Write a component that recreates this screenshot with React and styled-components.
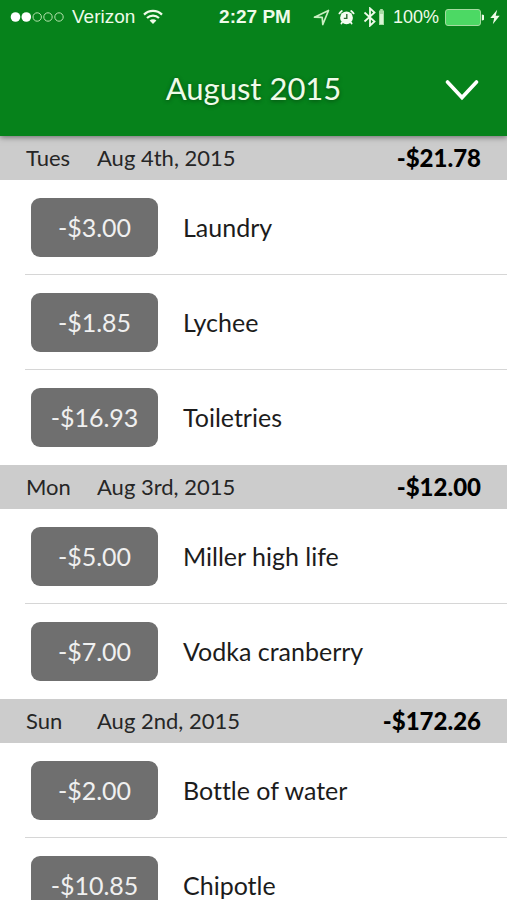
import React from 'react';
import styled, { createGlobalStyle } from 'styled-components';

const days = [
  {
    day: 'Tues',
    date: 'Aug 4th, 2015',
    total: '-$21.78',
    items: [
      { amount: '-$3.00', name: 'Laundry' },
      { amount: '-$1.85', name: 'Lychee' },
      { amount: '-$16.93', name: 'Toiletries' },
    ],
  },
  {
    day: 'Mon',
    date: 'Aug 3rd, 2015',
    total: '-$12.00',
    items: [
      { amount: '-$5.00', name: 'Miller high life' },
      { amount: '-$7.00', name: 'Vodka cranberry' },
    ],
  },
  {
    day: 'Sun',
    date: 'Aug 2nd, 2015',
    total: '-$172.26',
    items: [
      { amount: '-$2.00', name: 'Bottle of water' },
      { amount: '-$10.85', name: 'Chipotle' },
    ],
  },
];

const GlobalStyle = createGlobalStyle`
  * {
    box-sizing: border-box;
  }

  body {
    margin: 0;
    background: #fff;
    font-family: Lato, "Open Sans", sans-serif;
    font-variant-ligatures: none;
  }
`;

const Screen = styled.div`
  display: flex;
  flex-direction: column;
  height: 100vh;
`;

const TopBar = styled.header`
  position: relative;
  flex: none;
  background: #06821b;
  color: #effbe9;
  box-shadow: 0 1px 6px rgba(0, 0, 0, 0.5);
`;

const StatusBar = styled.div`
  display: grid;
  grid-template-columns: 1fr auto 1fr;
  align-items: center;
  height: 34px;
  padding: 0 7px 0 10px;
  font-family: "Liberation Sans", Arial, sans-serif;
  font-size: 19px;
`;

const StatusGroup = styled.div`
  display: flex;
  align-items: center;
  justify-content: ${(props) => (props.$end ? 'flex-end' : 'flex-start')};
  gap: ${(props) => props.$gap}px;

  svg {
    flex: none;
  }
`;

const Clock = styled.span`
  font-weight: 700;
`;

const BatteryLevel = styled.span`
  font-size: 18px;
`;

const TitleBar = styled.div`
  display: grid;
  grid-template-columns: 1fr auto 1fr;
  align-items: center;
  height: 102px;
  padding: 10px 22px 0;
`;

const Title = styled.h1`
  grid-column: 2;
  margin: 0;
  padding-bottom: 4px;
  font-size: 31px;
  font-weight: 400;
  line-height: 36px;
  text-shadow: 0 1px 4px rgba(0, 0, 0, 0.4);
`;

const MonthButton = styled.button`
  display: flex;
  justify-self: end;
  padding: 6px;
  border: 0;
  background: none;
  color: #fff;
  cursor: pointer;
`;

const Ledger = styled.main`
  flex: 1;
  min-height: 0;
  overflow-y: auto;
  scrollbar-width: none;
`;

const DayHeader = styled.h2`
  display: flex;
  align-items: center;
  height: 44px;
  margin: 0;
  padding: 0 26px 2px;
  background: #ccc;
  color: #262626;
  font-size: 22px;
  font-weight: 400;
`;

const Weekday = styled.span`
  width: 71px;
`;

const DayTotal = styled.strong`
  margin-left: auto;
  color: #000;
  font-size: 24px;
  font-weight: 900;
`;

const Entries = styled.ul`
  margin: 0;
  padding: 0 0 0 25px;
  list-style: none;
`;

const Entry = styled.li`
  display: flex;
  align-items: center;
  gap: 25px;
  height: 95px;
  padding: 1px 0 0 6px;
  border-bottom: 1px solid #d6d6d6;
  color: #1c1c1c;
  font-size: 25px;

  &:last-child {
    border-bottom-color: transparent;
  }
`;

const Amount = styled.button`
  flex: none;
  width: 127px;
  height: 59px;
  padding: 0 0 2px;
  border: 0;
  border-radius: 9px;
  background: #6f6f6f;
  color: #f0f0f0;
  font: inherit;
  cursor: pointer;
`;

const EntryName = styled.span`
  padding-bottom: 2px;
`;

const SignalDots = () => (
  <svg width="54" height="12" viewBox="0 0 54 12" aria-hidden="true">
    <circle cx="5.5" cy="6" r="4.8" fill="#fff" />
    <circle cx="16.3" cy="6" r="4.8" fill="#fff" />
    <g fill="none" stroke="#b5e3ae" strokeWidth="1">
      <circle cx="27.2" cy="6" r="4.2" />
      <circle cx="38" cy="6" r="4.2" />
      <circle cx="49" cy="6" r="4.2" />
    </g>
  </svg>
);

const WifiIcon = () => (
  <svg width="20" height="16" viewBox="0 0 20 16" aria-hidden="true">
    <g fill="none" stroke="currentColor" strokeWidth="2.2">
      <path d="M1 5.6a12.8 12.8 0 0 1 18 0" />
      <path d="M4 9a8.6 8.6 0 0 1 12 0" />
    </g>
    <path d="M6.6 11.6a4.8 4.8 0 0 1 6.8 0L10 15z" fill="currentColor" />
  </svg>
);

const LocationIcon = () => (
  <svg width="17" height="17" viewBox="0 0 17 17" aria-hidden="true">
    <path
      d="M1.5 8.2 15.5 1.5 9.8 15.5 9.2 8.4z"
      fill="none"
      stroke="#c9efc2"
      strokeWidth="1.7"
      strokeLinejoin="round"
    />
  </svg>
);

const AlarmIcon = () => (
  <svg width="17" height="17" viewBox="0 0 17 17" aria-hidden="true">
    <circle cx="8.5" cy="8.8" r="6.4" fill="#f4fcf0" />
    <g fill="none" stroke="#f4fcf0" strokeWidth="1.8" strokeLinecap="round">
      <path d="M1.4 4.4a9 9 0 0 1 2.4-2.5M15.6 4.4a9 9 0 0 0-2.4-2.5" />
      <path d="m4 13.6-.6.9M13 13.6l.6.9" />
    </g>
    <path d="M8.8 5v4.4H5.8" fill="none" stroke="#2b6b30" strokeWidth="1.4" />
  </svg>
);

// bluetooth rune with the accessory battery next to it
const BluetoothIcon = () => (
  <svg width="22" height="20" viewBox="0 0 22 20" aria-hidden="true">
    <path
      d="m1.5 5.5 10 9L7 18.7V1.3l4.5 4.2-10 9"
      fill="none"
      stroke="currentColor"
      strokeWidth="1.8"
    />
    <path d="M17.2 2h2.6v1.5H21V18h-5V3.5h1.2z" fill="#a9dca4" />
    <path d="M17 7h3v10h-3z" fill="#d9f4d4" />
  </svg>
);

const BatteryIcon = () => (
  <svg width="39" height="17" viewBox="0 0 39 17" aria-hidden="true">
    <rect x="0.5" y="0.5" width="35" height="16" rx="2.5" fill="#4cd964" stroke="#a5dca0" />
    <path d="M36.8 5.5a3 3 0 0 1 0 6z" fill="currentColor" />
  </svg>
);

const BoltIcon = () => (
  <svg width="10" height="16" viewBox="0 0 10 16" aria-hidden="true">
    <path d="M7.2.8.3 9h3.9l-1.4 6.2 6.9-8.5h-4z" fill="currentColor" />
  </svg>
);

const ChevronIcon = () => (
  <svg width="34" height="22" viewBox="0 0 34 22" aria-hidden="true">
    <path
      d="M2.5 3 17 18.500 31.500 3"
      fill="none"
      stroke="currentColor"
      strokeWidth="3.6"
      strokeLinecap="round"
    />
  </svg>
);

const App = () => {
  return (
    <Screen>
      <GlobalStyle />
      <TopBar>
        <StatusBar>
          <StatusGroup $gap={8}>
            <SignalDots />
            <span>Verizon</span>
            <WifiIcon />
          </StatusGroup>
          <Clock>2:27 PM</Clock>
          <StatusGroup $end $gap={8}>
            <StatusGroup $gap={8}>
              <LocationIcon />
              <AlarmIcon />
              <BluetoothIcon />
            </StatusGroup>
            <StatusGroup $gap={6}>
              <BatteryLevel>100%</BatteryLevel>
              <BatteryIcon />
              <BoltIcon />
            </StatusGroup>
          </StatusGroup>
        </StatusBar>
        <TitleBar>
          <Title>August 2015</Title>
          <MonthButton type="button" aria-label="Choose month">
            <ChevronIcon />
          </MonthButton>
        </TitleBar>
      </TopBar>
      <Ledger>
        {days.map((d) => (
          <section key={d.date}>
            <DayHeader>
              <Weekday>{d.day}</Weekday>
              <span>{d.date}</span>
              <DayTotal>{d.total}</DayTotal>
            </DayHeader>
            <Entries>
              {d.items.map((item) => (
                <Entry key={item.name}>
                  <Amount type="button">{item.amount}</Amount>
                  <EntryName>{item.name}</EntryName>
                </Entry>
              ))}
            </Entries>
          </section>
        ))}
      </Ledger>
    </Screen>
  );
};

export default App;
